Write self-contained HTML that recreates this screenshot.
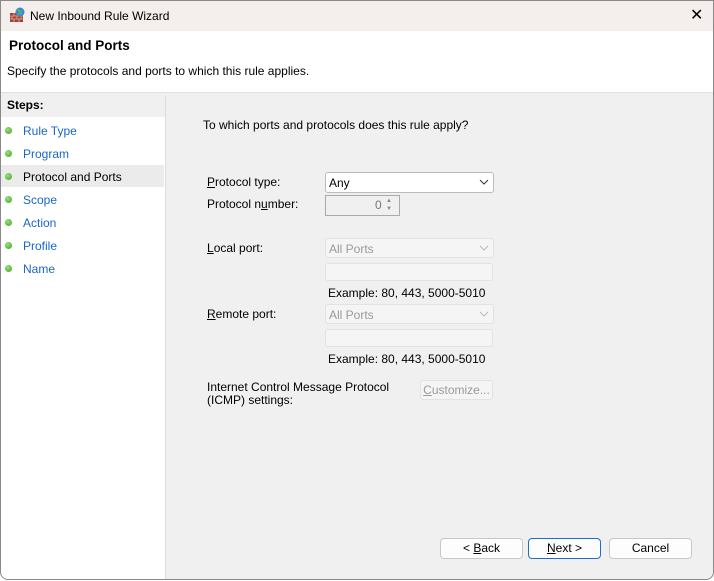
<!DOCTYPE html><html><head><style>
*{box-sizing:border-box;margin:0;padding:0}
body{width:714px;height:581px;background:#fff;font-family:"Liberation Sans",sans-serif;font-size:12px;color:#000;position:relative;overflow:hidden}
.win{position:absolute;left:0;top:0;width:714px;height:580px;overflow:hidden;background:#f0f0f0;border-radius:0 0 8px 8px}
.brd{position:absolute;left:0;top:0;width:714px;height:580px;border:1px solid #8a8a8a;border-radius:0 0 8px 8px;pointer-events:none}
.a{position:absolute;white-space:nowrap}
.tb{left:0;top:0;width:714px;height:31px;background:#f4eeed}
.hd{left:0;top:31px;width:714px;height:62px;background:#fff}
.left{left:0;top:95px;width:166px;height:485px;background:#fff;border-right:1px solid #ddd}
.dot{width:7px;height:7px;border-radius:50%;background:radial-gradient(circle at 40% 35%,#9be07a,#3aa21c)}
.lnk{color:#1a66c8}
.dd{background:#fff;border:1px solid #bbb;border-radius:3px;height:21px}
.dis{background:#f5f5f5;border:1px solid #e2e2e2;border-radius:3px;height:20px;color:#999}
.btn{border:1px solid #c8c8c8;border-radius:4px;background:#fdfdfd;height:21px;text-align:center;line-height:19px}
u{text-decoration:underline}
</style></head><body><div class="win">
<div class="a tb"></div>
<svg class="a" style="left:9px;top:7px" width="16" height="16"><rect x="1" y="6" width="13" height="9" fill="#a34030"/><path d="M1 9h13M1 12h13M5 6v3M10 6v3M3 9v3M8 9v3M12 9v3M5 12v3M10 12v3" stroke="#e8b0a0" stroke-width=".8"/><circle cx="11" cy="5" r="4.5" fill="#3a86d8"/><path d="M8 3c2 0 3 2 5 1M9 7c1-1 3 0 4-1" stroke="#5cc04a" stroke-width="1.5" fill="none"/></svg>
<div class="a" style="left:30px;top:9px;font-size:12px">New Inbound Rule Wizard</div>
<div class="a" style="left:690px;top:5px;font-size:16px;font-weight:300">✕</div>
<div class="a hd"></div>
<div class="a" style="left:9px;top:38px;font-size:13.5px;font-weight:bold">Protocol and Ports</div>
<div class="a" style="left:7px;top:64px">Specify the protocols and ports to which this rule applies.</div>
<div class="a" style="left:0;top:92px;width:714px;height:1px;background:#e0e0e0"></div>
<div class="a left"></div>
<div class="a" style="left:1px;top:95px;width:164px;height:22px;background:#f0f0f0"></div>
<div class="a" style="left:7px;top:98px;font-weight:bold">Steps:</div>
<div class="a" style="left:1px;top:165px;width:163px;height:22px;background:#ebebeb"></div>
<div class="a dot" style="left:5px;top:127px"></div><div class="a lnk" style="left:23px;top:124px">Rule Type</div>
<div class="a dot" style="left:5px;top:150px"></div><div class="a lnk" style="left:23px;top:147px">Program</div>
<div class="a dot" style="left:5px;top:173px"></div><div class="a" style="left:23px;top:170px">Protocol and Ports</div>
<div class="a dot" style="left:5px;top:196px"></div><div class="a lnk" style="left:23px;top:193px">Scope</div>
<div class="a dot" style="left:5px;top:219px"></div><div class="a lnk" style="left:23px;top:216px">Action</div>
<div class="a dot" style="left:5px;top:242px"></div><div class="a lnk" style="left:23px;top:239px">Profile</div>
<div class="a dot" style="left:5px;top:265px"></div><div class="a lnk" style="left:23px;top:262px">Name</div>
<div class="a" style="left:203px;top:118px">To which ports and protocols does this rule apply?</div>
<div class="a" style="left:207px;top:175px"><u>P</u>rotocol type:</div>
<div class="a dd" style="left:325px;top:172px;width:169px"></div>
<div class="a" style="left:329px;top:176px">Any</div>
<svg class="a" style="left:479px;top:179px" width="10" height="6"><path d="M1 1l4 4 4-4" stroke="#333" fill="none"/></svg>
<div class="a" style="left:207px;top:197px">Protocol n<u>u</u>mber:</div>
<div class="a" style="left:325px;top:195px;width:75px;height:21px;border:1px solid #aaa;background:#f0f0f0"></div>
<div class="a" style="left:375px;top:198px;color:#777">0</div>
<div class="a" style="left:386px;top:197px;font-size:6px;color:#888;line-height:8px">▲<br>▼</div>
<div class="a" style="left:207px;top:241px"><u>L</u>ocal port:</div>
<div class="a dis" style="left:325px;top:238px;width:169px"></div>
<div class="a" style="left:329px;top:242px;color:#999">All Ports</div>
<svg class="a" style="left:479px;top:245px" width="10" height="6"><path d="M1 1l4 4 4-4" stroke="#bbb" fill="none"/></svg>
<div class="a dis" style="left:325px;top:263px;width:168px;height:18px"></div>
<div class="a" style="left:328px;top:286px">Example: 80, 443, 5000-5010</div>
<div class="a" style="left:207px;top:307px"><u>R</u>emote port:</div>
<div class="a dis" style="left:325px;top:304px;width:169px"></div>
<div class="a" style="left:329px;top:308px;color:#999">All Ports</div>
<svg class="a" style="left:479px;top:311px" width="10" height="6"><path d="M1 1l4 4 4-4" stroke="#bbb" fill="none"/></svg>
<div class="a dis" style="left:325px;top:329px;width:168px;height:18px"></div>
<div class="a" style="left:328px;top:352px">Example: 80, 443, 5000-5010</div>
<div class="a" style="left:207px;top:381px;line-height:13px">Internet Control Message Protocol<br>(ICMP) settings:</div>
<div class="a dis" style="left:420px;top:380px;width:73px;height:20px;text-align:center;line-height:18px"><u>C</u>ustomize...</div>
<div class="a btn" style="left:440px;top:538px;width:83px">&lt; <u>B</u>ack</div>
<div class="a btn" style="left:528px;top:538px;width:73px;border:1px solid #1a6fcc"><u>N</u>ext &gt;</div>
<div class="a btn" style="left:609px;top:538px;width:83px">Cancel</div>
</div><div class="brd"></div></body></html>
